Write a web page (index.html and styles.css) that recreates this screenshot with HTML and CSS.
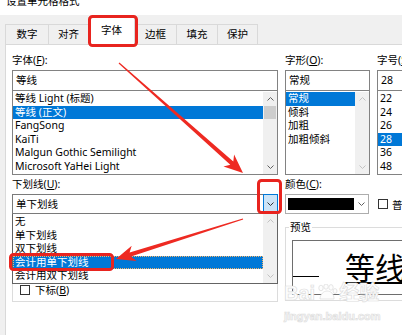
FILE: index.html
```html
<!DOCTYPE html>
<html lang="zh-CN">
<head>
    <meta charset="UTF-8">
    <meta name="viewport" content="width=device-width, initial-scale=1.0">
    <title>设置单元格格式</title>
    <link rel="stylesheet" href="styles.css">
</head>
<body>
    <div class="titlebar"><span>设置单元格格式</span></div>

    <div class="dialog">
        <div class="tabs">
            <div class="tab">数字</div>
            <div class="tab">对齐</div>
            <div class="tab active">字体</div>
            <div class="tab">边框</div>
            <div class="tab">填充</div>
            <div class="tab">保护</div>
        </div>

        <div class="panel">
            <!-- font / style / size -->
            <div class="row">
                <div class="field">
                    <div class="label">字体(<u>F</u>):</div>
                    <div class="textbox">等线</div>
                    <div class="listbox">
                        <div class="items">
                            <div class="item">等线 Light (标题)</div>
                            <div class="item selected">等线 (正文)</div>
                            <div class="item">FangSong</div>
                            <div class="item">KaiTi</div>
                            <div class="item">Malgun Gothic Semilight</div>
                            <div class="item">Microsoft YaHei Light</div>
                        </div>
                        <div class="scrollbar">
                            <span class="arrow"><svg width="7" height="4" viewBox="0 0 7 4"><polyline points="0.5,3.5 3.5,0.5 6.5,3.5"/></svg></span>
                            <span class="thumb"></span>
                            <span class="spacer"></span>
                            <span class="arrow"><svg width="7" height="4" viewBox="0 0 7 4"><polyline points="0.5,0.5 3.5,3.5 6.5,0.5"/></svg></span>
                        </div>
                    </div>
                </div>

                <div class="field">
                    <div class="label">字形(<u>O</u>):</div>
                    <div class="textbox">常规</div>
                    <div class="listbox">
                        <div class="items">
                            <div class="item selected">常规</div>
                            <div class="item">倾斜</div>
                            <div class="item">加粗</div>
                            <div class="item">加粗倾斜</div>
                        </div>
                        <div class="scrollbar disabled">
                            <span class="arrow"><svg width="7" height="4" viewBox="0 0 7 4"><polyline points="0.5,3.5 3.5,0.5 6.5,3.5"/></svg></span>
                            <span class="spacer"></span>
                            <span class="arrow"><svg width="7" height="4" viewBox="0 0 7 4"><polyline points="0.5,0.5 3.5,3.5 6.5,0.5"/></svg></span>
                        </div>
                    </div>
                </div>

                <div class="field">
                    <div class="label">字号(<u>S</u>):</div>
                    <div class="textbox">28</div>
                    <div class="listbox">
                        <div class="items">
                            <div class="item">22</div>
                            <div class="item">24</div>
                            <div class="item">26</div>
                            <div class="item selected">28</div>
                            <div class="item">36</div>
                            <div class="item">48</div>
                        </div>
                    </div>
                </div>
            </div>

            <!-- underline / colour / normal font -->
            <div class="row second">
                <div class="field">
                    <div class="label">下划线(<u>U</u>):</div>
                    <div class="combo-wrap">
                        <div class="combo">
                            <span class="value">单下划线</span>
                            <span class="button"><svg width="7" height="4" viewBox="0 0 7 4"><polyline points="0.5,0.5 3.5,3.5 6.5,0.5"/></svg></span>
                        </div>
                        <div class="popup">
                            <div class="items">
                                <div class="item">无</div>
                                <div class="item">单下划线</div>
                                <div class="item">双下划线</div>
                                <div class="item focused">会计用单下划线</div>
                                <div class="item">会计用双下划线</div>
                            </div>
                            <div class="scrollbar disabled">
                                <span class="arrow"><svg width="7" height="4" viewBox="0 0 7 4"><polyline points="0.5,3.5 3.5,0.5 6.5,3.5"/></svg></span>
                                <span class="spacer"></span>
                                <span class="arrow"><svg width="7" height="4" viewBox="0 0 7 4"><polyline points="0.5,0.5 3.5,3.5 6.5,0.5"/></svg></span>
                            </div>
                        </div>
                    </div>
                </div>

                <div class="field">
                    <div class="label">颜色(<u>C</u>):</div>
                    <div class="colorbox">
                        <span class="swatch"></span>
                        <span class="arrow"><svg width="7" height="4" viewBox="0 0 7 4"><polyline points="0.5,0.5 3.5,3.5 6.5,0.5"/></svg></span>
                    </div>
                </div>

                <div class="check-field">
                    <span class="box"></span>
                    <span>普通字体(<u>N</u>)</span>
                </div>
            </div>

            <!-- effects (mostly under the open list) / preview -->
            <div class="row groups">
                <div class="group effects">
                    <div class="check"><span class="box"></span><span>下标(<u>B</u>)</span></div>
                </div>

                <div class="group preview">
                    <div class="legend">预览</div>
                    <div class="sample-box">
                        <span class="rule"></span>
                        <span class="sample">等线</span>
                    </div>
                </div>
            </div>
        </div>
    </div>

    <div class="watermark">
        <div class="wm-top">Bai<svg width="22" height="17" viewBox="0 0 22 17"><ellipse cx="5" cy="4" rx="2.2" ry="2.8"/><ellipse cx="10" cy="2.6" rx="2.2" ry="2.6"/><ellipse cx="15" cy="3.4" rx="2.2" ry="2.8"/><ellipse cx="19" cy="7" rx="2" ry="2.4"/><path d="M4 15 C4 10 8 7 11 7 C15 7 18 10 18 15 Z"/></svg>经验</div>
        <div class="wm-url">jingyan.baidu.com</div>
    </div>

    <svg class="marks" width="402" height="335" viewBox="0 0 402 335">
        <rect x="89.5" y="16.5" width="47" height="29" rx="3"/>
        <rect x="258.5" y="180.5" width="22" height="32" rx="3"/>
        <rect x="10.5" y="254.5" width="102" height="15" rx="3"/>
        <polygon class="arrow-shape" points="119.4,62.6 233.3,161.5 234.1,154.4 243,173 223.5,166.4 230.3,164.7 118.6,63.4"/>
        <polygon class="arrow-shape" points="242.8,218.4 129.6,252.4 131.7,245.7 116,259 136.5,260.9 131,256.6 243.2,219.6"/>
    </svg>
</body>
</html>
```

FILE: styles.css
```css
* {
    box-sizing: border-box;
}

html, body {
    margin: 0;
}

body {
    position: relative;
    width: 402px;
    height: 335px;
    overflow: hidden;
    background: #f0f0f0;
    font-family: "Noto Sans", "Noto Sans CJK SC", sans-serif;
    font-size: 10.5px;
    color: #000;
}

u {
    text-underline-offset: 1px;
}

/* title bar, only its lower half is in view */
.titlebar {
    height: 15px;
    padding-left: 6px;
    background: #fff;
    overflow: hidden;
}
.titlebar span {
    display: block;
    margin-top: -5px;
    line-height: 13px;
}

.dialog {
    padding-left: 5px;
}

/* tabs */
.tabs {
    display: flex;
    align-items: flex-end;
    height: 29px;
}
.tab {
    width: 41px;
    height: 20px;
    border: 1px solid #d9d9d9;
    border-right: 0;
    border-bottom: 0;
    text-align: center;
    line-height: 19px;
}
.tab:nth-child(1) {
    width: 43px;
}
.tab:nth-child(2) {
    width: 40px;
}
.tab:last-child {
    border-right: 1px solid #d9d9d9;
}
.tab.active {
    position: relative;
    width: 47px;
    height: 28px;
    margin-bottom: -1px;
    background: #fff;
    border-right: 1px solid #d9d9d9;
    line-height: 25px;
}
.tab.active + .tab {
    border-left: 0;
}

/* tab page */
.panel {
    height: 291px;
    padding: 9px 0 0 6px;
    background: #fff;
    border-top: 1px solid #d9d9d9;
    border-left: 1px solid #d9d9d9;
}

.row {
    display: grid;
    grid-template-columns: 266px 85px 70px;
    column-gap: 7px;
    align-items: start;
}
.row.second {
    margin-top: 3px;
}

.label {
    margin-bottom: 3px;
    line-height: 13px;
    white-space: nowrap;
}

.textbox {
    height: 21px;
    padding-left: 3px;
    border: 1px solid #828282;
    line-height: 19px;
    white-space: nowrap;
    overflow: hidden;
}

.listbox {
    display: flex;
    height: 84px;
    border: 1px solid #828282;
    border-top: 0;
}

.items {
    flex: 1;
    min-width: 0;
    padding-top: 1px;
}
.item {
    height: 13.5px;
    padding-left: 2px;
    line-height: 13.5px;
    white-space: nowrap;
    overflow: hidden;
}
.item.selected {
    background: #0078d7;
    color: #fff;
}
.item.focused {
    background: #0078d7;
    color: #fff;
    outline: 1px dotted #f2b36b;
    outline-offset: -1px;
}

/* scroll bars */
.scrollbar {
    display: flex;
    flex-direction: column;
    width: 14px;
    margin-top: 1px;
    background: #f0f0f0;
    color: #606060;
}
.scrollbar.disabled {
    color: #c2c2c2;
}
.arrow {
    display: flex;
    align-items: center;
    justify-content: center;
    height: 14px;
}
.thumb {
    height: 13px;
    margin: 0 1px;
    background: #cdcdcd;
}
.spacer {
    flex: 1;
}

svg polyline {
    fill: none;
    stroke: currentColor;
    stroke-width: 1;
}

/* underline combo with its open drop-down */
.combo-wrap {
    position: relative;
}
.combo {
    display: flex;
    height: 20px;
    border: 1px solid #7a7a7a;
}
.combo .value {
    flex: 1;
    padding-left: 3px;
    line-height: 18px;
}
.combo .button {
    display: flex;
    align-items: center;
    justify-content: center;
    width: 15px;
    margin: -1px -1px -1px 0;
    background: #cce4f7;
    border: 1px solid #0078d7;
    color: #333;
}

.popup {
    position: absolute;
    top: 100%;
    left: 0;
    right: 0;
    z-index: 2;
    display: flex;
    height: 70px;
    background: #fff;
    border: 1px solid #646464;
    border-top: 0;
}
.popup .items {
    padding-top: 1px;
}
.popup .scrollbar {
    margin-top: 0;
}

/* colour picker */
.colorbox {
    display: flex;
    width: 84px;
    height: 20px;
    padding: 3px 0 3px 2px;
    border: 1px solid #adadad;
}
.swatch {
    width: 66px;
    background: #000;
}
.colorbox .arrow {
    flex: 1;
    height: auto;
    color: #606060;
}

.check-field {
    display: flex;
    align-items: center;
    gap: 4px;
    height: 20px;
    margin-top: 16px;
    padding-left: 1px;
    white-space: nowrap;
}

.box {
    flex: none;
    width: 10px;
    height: 10px;
    border: 1px solid #333;
    background: #fff;
}

/* group boxes */
.group {
    margin-top: 13px;
    padding: 0 0 5px 7px;
    border: 1px solid #dcdcdc;
}
.legend {
    display: table;
    margin: -7px 0 0 -3px;
    padding: 0 1px;
    line-height: 13px;
    background: #fff;
}

.group.effects {
    padding-top: 55px;
}
.check {
    display: flex;
    align-items: center;
    gap: 5px;
    height: 13px;
    white-space: nowrap;
}

.group.preview {
    grid-column: 2 / 4;
    padding-left: 6px;
    border-right: 0;
}
.sample-box {
    display: flex;
    align-items: flex-start;
    height: 55px;
    margin-top: 6px;
    border: 1px solid #6e6e6e;
    border-right: 0;
    overflow: hidden;
}
.rule {
    flex: none;
    width: 26px;
    height: 1px;
    margin-top: 35px;
    background: #000;
}
.sample {
    margin: 10px 0 0 26px;
    font-family: "Noto Sans CJK SC", sans-serif;
    font-size: 30px;
    line-height: 30px;
    white-space: nowrap;
    text-decoration: underline;
    text-decoration-thickness: 2px;
    text-underline-offset: 3px;
}

/* site watermark */
.watermark {
    position: absolute;
    left: 284px;
    top: 281px;
    z-index: 4;
    color: #fdfdfd;
    -webkit-text-stroke: 0.7px #dedede;
    font-family: "Liberation Sans", "Noto Sans CJK SC", sans-serif;
    font-weight: bold;
}
.wm-top {
    display: flex;
    align-items: flex-end;
    height: 22px;
    font-size: 20px;
    line-height: 20px;
}
.wm-top svg {
    margin: 0 1px 2px;
    fill: #fdfdfd;
    stroke: #dedede;
    stroke-width: 0.8;
}
.wm-url {
    margin-top: 8px;
    font-size: 11px;
    line-height: 11px;
}

/* red annotations */
.marks {
    position: absolute;
    left: 0;
    top: 0;
    z-index: 5;
}
.marks rect {
    fill: none;
    stroke: #e8241f;
    stroke-width: 3;
}
.marks .arrow-shape {
    fill: #ee2a22;
}
```
